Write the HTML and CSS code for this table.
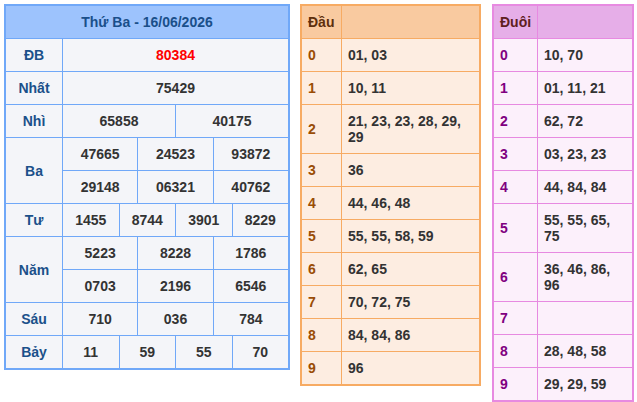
FILE: index.html
```html
<!DOCTYPE html>
<html lang="vi">
<head>
<meta charset="utf-8">
<title>Kết quả xổ số</title>
<link rel="stylesheet" href="styles.css">
</head>
<body>
<div class="wrap">
  <div class="kq">
    <div class="kq-head">Thứ Ba - 16/06/2026</div>

    <div class="lbl">ĐB</div>
    <div class="vals c1"><div class="v red">80384</div></div>

    <div class="lbl">Nhất</div>
    <div class="vals c1"><div class="v">75429</div></div>

    <div class="lbl">Nhì</div>
    <div class="vals c2"><div class="v">65858</div><div class="v">40175</div></div>

    <div class="lbl">Ba</div>
    <div class="vals c3">
      <div class="v">47665</div><div class="v">24523</div><div class="v">93872</div>
      <div class="v">29148</div><div class="v">06321</div><div class="v">40762</div>
    </div>

    <div class="lbl">Tư</div>
    <div class="vals c4"><div class="v">1455</div><div class="v">8744</div><div class="v">3901</div><div class="v">8229</div></div>

    <div class="lbl">Năm</div>
    <div class="vals c3">
      <div class="v">5223</div><div class="v">8228</div><div class="v">1786</div>
      <div class="v">0703</div><div class="v">2196</div><div class="v">6546</div>
    </div>

    <div class="lbl">Sáu</div>
    <div class="vals c3"><div class="v">710</div><div class="v">036</div><div class="v">784</div></div>

    <div class="lbl">Bảy</div>
    <div class="vals c4"><div class="v">11</div><div class="v">59</div><div class="v">55</div><div class="v">70</div></div>
  </div>

  <div class="lt dau">
    <div class="h">Đầu</div><div class="h"></div>
    <div class="k">0</div><div class="n">01, 03</div>
    <div class="k">1</div><div class="n">10, 11</div>
    <div class="k">2</div><div class="n">21, 23, 23, 28, 29, 29</div>
    <div class="k">3</div><div class="n">36</div>
    <div class="k">4</div><div class="n">44, 46, 48</div>
    <div class="k">5</div><div class="n">55, 55, 58, 59</div>
    <div class="k">6</div><div class="n">62, 65</div>
    <div class="k">7</div><div class="n">70, 72, 75</div>
    <div class="k">8</div><div class="n">84, 84, 86</div>
    <div class="k">9</div><div class="n">96</div>
  </div>

  <div class="lt duoi">
    <div class="h">Đuôi</div><div class="h"></div>
    <div class="k">0</div><div class="n">10, 70</div>
    <div class="k">1</div><div class="n">01, 11, 21</div>
    <div class="k">2</div><div class="n">62, 72</div>
    <div class="k">3</div><div class="n">03, 23, 23</div>
    <div class="k">4</div><div class="n">44, 84, 84</div>
    <div class="k">5</div><div class="n">55, 55, 65, 75</div>
    <div class="k">6</div><div class="n">36, 46, 86, 96</div>
    <div class="k">7</div><div class="n"></div>
    <div class="k">8</div><div class="n">28, 48, 58</div>
    <div class="k">9</div><div class="n">29, 29, 59</div>
  </div>
</div>
</body>
</html>
```

FILE: styles.css
```css
html, body {
  margin: 0;
  padding: 0;
  background: #ffffff;
}
body {
  font-family: "Liberation Sans", Arial, sans-serif;
  font-size: 14px;
  font-weight: bold;
  line-height: 16px;
  color: #333333;
}
.wrap {
  display: flex;
  align-items: flex-start;
  padding: 4px 0 0 4px;
}

/* Results table */
.kq {
  box-sizing: border-box;
  width: 286px;
  display: grid;
  grid-template-columns: 56px 1fr;
  gap: 1px;
  background: #70a8f8;
  border: 2px solid #70a8f8;
}
.kq-head {
  grid-column: 1 / -1;
  background: #9dc3fd;
  color: #1a4f8a;
  text-align: center;
  padding: 8px 0;
}
.lbl {
  background: #f4f5f9;
  color: #1b508a;
  display: flex;
  align-items: center;
  justify-content: center;
  padding: 8px 0;
}
.vals {
  display: grid;
  gap: 1px;
}
.c1 { grid-template-columns: 1fr; }
.c2 { grid-template-columns: 1fr 1fr; }
.c3 { grid-template-columns: 1fr 1fr 1fr; }
.c4 { grid-template-columns: 1fr 1fr 1fr 1fr; }
.v {
  background: #f4f5f9;
  text-align: center;
  padding: 8px 0;
}
.red { color: #ff0000; }

/* Loto head/tail tables */
.lt {
  box-sizing: border-box;
  display: grid;
  gap: 1px;
}
.lt .h, .lt .k, .lt .n {
  padding: 8px 6px;
}
.lt .k {
  display: flex;
  align-items: center;
}
.dau {
  margin-left: 10px;
  width: 181px;
  grid-template-columns: 39px 1fr;
  background: #f7ab63;
  border: 2px solid #f7ab63;
}
.dau .h { background: #f9caa0; color: #5e2f0c; }
.dau .k, .dau .n { background: #fdede1; }
.dau .k { color: #9a4d06; }

.duoi {
  margin-left: 11px;
  width: 142px;
  grid-template-columns: 43px 1fr;
  background: #e78ae1;
  border: 2px solid #e78ae1;
}
.duoi .h { background: #e6aee8; color: #5e2020; }
.duoi .k, .duoi .n { background: #fcf0fb; }
.duoi .k { color: #800080; }
```
